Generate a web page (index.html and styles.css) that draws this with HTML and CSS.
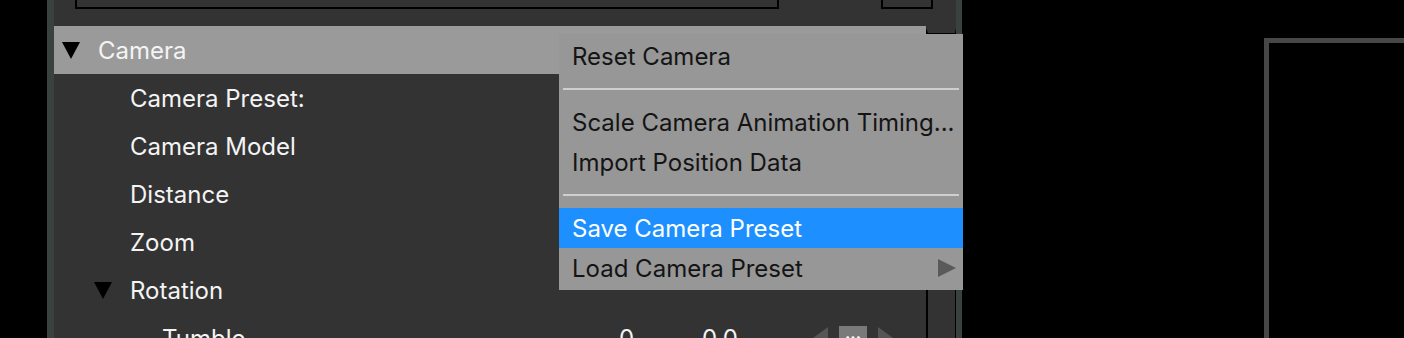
FILE: index.html
```html
<!DOCTYPE html>
<html lang="en">
<head>
    <meta charset="UTF-8">
    <meta name="viewport" content="width=device-width, initial-scale=1.0">
    <title>Camera Attributes</title>
    <link rel="stylesheet" href="styles.css">
</head>
<body>
    <div class="screen">
        <div class="gutter"></div>

        <div class="panel">
            <div class="panel-top">
                <div class="field field-wide"></div>
                <div class="field field-small"></div>
            </div>
            <div class="panel-body">
                <ul class="tree">
                    <li class="row row-head"><span class="caret open"></span>Camera</li>
                    <li class="row level-1"><span class="caret"></span>Camera Preset:</li>
                    <li class="row level-1"><span class="caret"></span>Camera Model</li>
                    <li class="row level-1"><span class="caret"></span>Distance</li>
                    <li class="row level-1"><span class="caret"></span>Zoom</li>
                    <li class="row level-1"><span class="caret open"></span>Rotation</li>
                    <li class="row level-2">
                        <span class="caret"></span>Tumble
                        <div class="values">
                            <span class="num num-int">0</span>
                            <span class="num num-float">0.0</span>
                            <span class="step step-left"></span>
                            <span class="more">...</span>
                            <span class="step step-right"></span>
                        </div>
                    </li>
                </ul>
                <div class="scrollbar"></div>
            </div>
        </div>

        <div class="viewport">
            <div class="frame"></div>
        </div>

        <!-- context menu opened on the Camera header -->
        <ul class="menu">
            <li class="menu-item">Reset Camera</li>
            <li class="menu-sep"></li>
            <li class="menu-item">Scale Camera Animation Timing...</li>
            <li class="menu-item">Import Position Data</li>
            <li class="menu-sep"></li>
            <li class="menu-item active">Save Camera Preset</li>
            <li class="menu-item has-sub">Load Camera Preset<span class="sub-arrow"></span></li>
        </ul>
    </div>
</body>
</html>
```

FILE: styles.css
```css
* {
    box-sizing: border-box;
}

body {
    margin: 0;
    background-color: #000;
    font-family: Inter, "Noto Sans", sans-serif;
    font-size: 24px;
    overflow: hidden;
}

.screen {
    position: relative;
    display: flex;
    width: 1404px;
    height: 338px;
    overflow: hidden;
}

.gutter {
    width: 47px;
    flex-shrink: 0;
}

.panel {
    width: 915px;
    flex-shrink: 0;
    background-color: #333;
    border-left: 7px solid #39423f;
    border-right: 6px solid #39423f;
    display: flex;
    flex-direction: column;
    overflow: hidden;
}

.panel-top {
    height: 26px;
    flex-shrink: 0;
    display: flex;
    padding-left: 21px;
}

.field {
    height: 9px;
    border: 2px solid #000;
    border-top: none;
}

.field-wide {
    width: 704px;
}

.field-small {
    width: 52px;
    margin-left: 102px;
}

.panel-body {
    display: flex;
    flex: 1;
    min-height: 0;
}

.tree {
    list-style: none;
    margin: 0;
    padding: 0;
    flex: 1;
    color: #f4f4f4;
}

.row {
    height: 48px;
    display: flex;
    align-items: center;
    padding-left: 8px;
    white-space: nowrap;
}

.row-head {
    background-color: #9a9a9a;
}

.level-1 {
    padding-left: 40px;
}

.level-2 {
    padding-left: 72px;
}

.caret {
    width: 36px;
    flex-shrink: 0;
    display: inline-block;
}

.caret.open::before {
    content: "";
    display: block;
    width: 0;
    height: 0;
    border-left: 9px solid transparent;
    border-right: 9px solid transparent;
    border-top: 17px solid #000;
}

.values {
    margin-left: auto;
    padding-right: 33px;
    display: flex;
    align-items: center;
}

.num-int {
    margin-right: 68px;
}

.num-float {
    margin-right: 75px;
}

.step {
    width: 0;
    height: 0;
    border-top: 11px solid transparent;
    border-bottom: 11px solid transparent;
}

.step-left {
    border-right: 15px solid #555;
}

.step-right {
    border-left: 15px solid #555;
}

.more {
    width: 28px;
    height: 24px;
    margin: 0 11px;
    background-color: #7a7a7a;
    color: #fff;
    font-size: 16px;
    font-weight: bold;
    line-height: 14px;
    text-align: center;
}

.scrollbar {
    width: 30px;
    margin-top: 2px;
    border-left: 2px solid #000;
    border-right: 1px solid #000;
    border-top: 5px solid #333;
    box-shadow: inset 0 1px 0 #000;
}

.viewport {
    flex: 1;
    padding: 38px 0 0 302px;
}

.frame {
    height: 100%;
    border-top: 5px solid #474747;
    border-left: 5px solid #474747;
}

/* context menu */
.menu {
    position: absolute;
    left: 559px;
    top: 34px;
    width: 404px;
    margin: 0;
    padding: 2px 0;
    list-style: none;
    background-color: #979797;
    color: #141414;
}

.menu-item {
    height: 40px;
    display: flex;
    align-items: center;
    padding-left: 13px;
    white-space: nowrap;
}

.menu-item.active {
    background-color: #1e8fff;
    color: #fff;
}

.has-sub {
    justify-content: space-between;
    padding-right: 7px;
}

.sub-arrow {
    width: 0;
    height: 0;
    border-top: 9px solid transparent;
    border-bottom: 9px solid transparent;
    border-left: 18px solid #5a5a5a;
}

.menu-sep {
    height: 26px;
    padding: 12px 4px;
}

.menu-sep::before {
    content: "";
    display: block;
    height: 2px;
    background-color: #cfcfcf;
}
```
